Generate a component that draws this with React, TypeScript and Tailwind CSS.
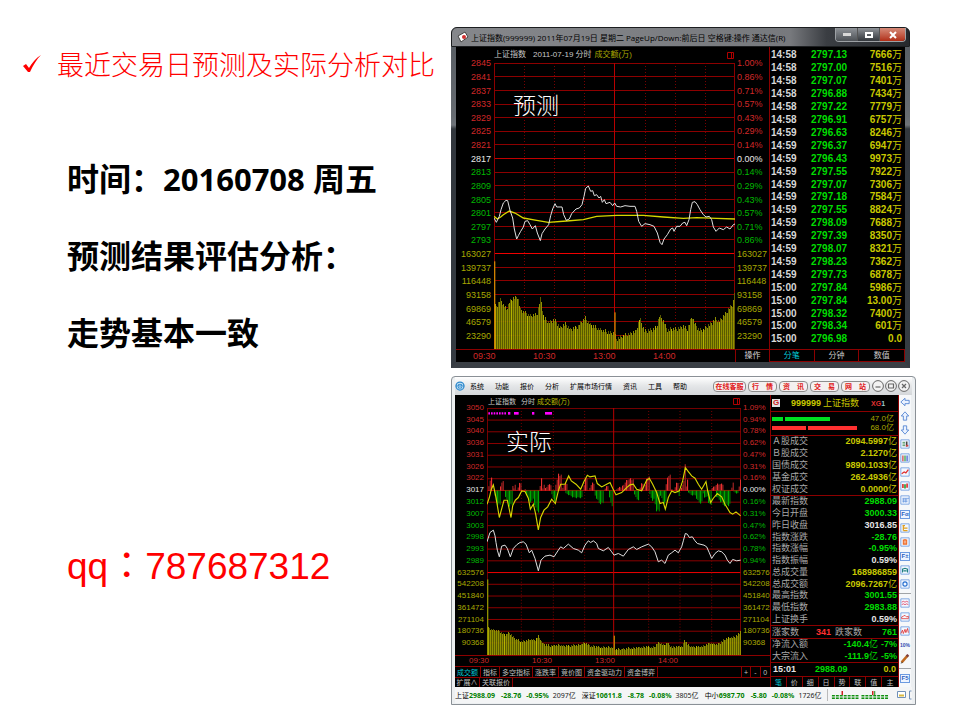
import React from "react";

const UI = "font-['Liberation_Sans','Noto_Sans_CJK_SC',sans-serif]";

type Point = [number, number];

const toPoints = (pts: Point[]) => pts.map((p) => p.join(",")).join(" ");

const valueAt = (profile: Point[], x: number) => {
  for (let i = 1; i < profile.length; i++) {
    const [x0, y0] = profile[i - 1];
    const [x1, y1] = profile[i];
    if (x <= x1) return y0 + ((y1 - y0) * (x - x0)) / (x1 - x0);
  }
  return profile[profile.length - 1][1];
};

/* ---------- forecast chart data ---------- */

const forecastPrice: Point[] = [
  [132, 85], [139, 98], [148, 80], [153, 60], [160, 40], [168, 32], [173, 33], [180, 62], [188, 85], [193, 118],
  [200, 148], [205, 138], [212, 125], [220, 112], [225, 95], [233, 93], [240, 105], [247, 118], [256, 108],
  [262, 130], [271, 153], [276, 132], [285, 118], [296, 105], [302, 78], [308, 58], [315, 42], [320, 52],
  [336, 52], [341, 75], [349, 92], [358, 88], [365, 72], [378, 58], [388, 55], [396, 45], [402, 20], [407, -4],
  [415, -11], [422, 5], [428, 3], [433, 18], [440, 15], [447, 25], [452, 20], [457, 38], [463, 30], [468, 42],
  [480, 38], [488, 48], [494, 40], [500, 50], [512, 52], [525, 48], [540, 50], [555, 50], [560, 65], [566, 95],
  [575, 110], [585, 102], [600, 105], [612, 110], [622, 130], [630, 158], [636, 165], [642, 148], [652, 135],
  [662, 118], [668, 115], [672, 125], [680, 110], [690, 110], [698, 100], [705, 98], [710, 108], [717, 90],
  [722, 60], [727, 38], [735, 36], [742, 45], [750, 60], [760, 75], [768, 82], [778, 80], [785, 90], [790, 112],
  [798, 125], [808, 115], [820, 120], [830, 112], [840, 118], [850, 105], [855, 103],
];
const forecastAverage: Point[] = [
  [132, 80], [142, 88], [152, 82], [160, 75], [178, 64], [195, 70], [220, 85], [260, 92], [295, 98], [350, 94],
  [400, 90], [440, 80], [500, 77], [580, 77], [640, 82], [700, 86], [740, 84], [800, 86], [855, 88],
];
const forecastVolume: Point[] = [
  [132, 345], [138, 350], [150, 330], [168, 360], [178, 335], [190, 325], [202, 322], [210, 360], [222, 368],
  [240, 378], [260, 375], [266, 345], [271, 325], [280, 385], [295, 398], [312, 390], [330, 415], [345, 402],
  [360, 420], [380, 412], [404, 385], [420, 405], [450, 420], [480, 430], [493, 432], [498, 448], [520, 438],
  [545, 430], [557, 425], [568, 385], [582, 425], [605, 420], [618, 415], [627, 378], [640, 395], [650, 420],
  [680, 418], [700, 410], [710, 420], [718, 400], [725, 378], [732, 400], [745, 420], [760, 420], [772, 408],
  [785, 400], [795, 388], [805, 395], [815, 385], [828, 370], [838, 352], [848, 345], [851, 315], [855, 285],
];

/* ---------- actual chart data ---------- */

const actualYellow: Point[] = [
  [111, 390], [118, 370], [124, 345], [130, 332], [138, 370], [148, 430], [156, 400], [162, 378], [172, 378],
  [183, 430], [188, 395], [196, 378], [205, 370], [215, 350], [225, 352], [235, 372], [241, 405], [250, 390],
  [257, 420], [265, 467], [272, 430], [282, 408], [293, 398], [305, 375], [316, 388], [325, 350], [332, 330],
  [345, 330], [356, 305], [364, 320], [378, 330], [392, 345], [402, 322], [412, 303], [420, 308], [435, 305],
  [442, 328], [455, 338], [470, 330], [480, 325], [488, 342], [498, 362], [515, 355], [530, 340], [540, 332],
  [550, 330], [560, 345], [575, 350], [590, 318], [598, 312], [608, 330], [620, 355], [630, 388], [640, 385],
  [646, 405], [655, 370], [665, 350], [675, 355], [688, 350], [698, 320], [706, 280], [715, 292], [725, 305],
  [735, 312], [745, 330], [755, 345], [768, 322], [773, 350], [782, 385], [790, 372], [802, 358], [815, 368],
  [825, 390], [840, 415], [848, 420], [858, 413], [872, 425],
];
const actualWhite: Point[] = [
  [111, 503], [120, 475], [130, 468], [135, 485], [138, 505], [142, 528], [148, 548], [155, 516], [165, 513],
  [172, 523], [181, 548], [190, 523], [200, 512], [210, 505], [220, 503], [228, 510], [238, 536], [245, 528],
  [255, 553], [265, 590], [273, 558], [285, 546], [300, 543], [312, 548], [325, 528], [332, 518], [340, 523],
  [355, 510], [370, 523], [385, 528], [395, 536], [405, 513], [415, 500], [422, 505], [430, 500], [440, 508],
  [445, 523], [460, 530], [475, 520], [485, 533], [492, 543], [505, 538], [520, 546], [535, 526], [550, 518],
  [560, 526], [575, 518], [595, 510], [605, 518], [615, 533], [625, 563], [635, 558], [645, 568], [655, 543],
  [665, 536], [675, 528], [685, 536], [695, 518], [700, 500], [706, 478], [712, 480], [718, 490], [727, 488],
  [735, 500], [742, 508], [750, 510], [762, 513], [770, 518], [778, 536], [785, 553], [795, 538], [805, 530],
  [815, 533], [825, 543], [832, 558], [840, 568], [848, 556], [860, 560], [872, 558],
];
const actualVolume: Point[] = [
  [111, 760], [130, 768], [150, 773], [165, 783], [177, 776], [195, 796], [215, 802], [240, 796], [255, 798],
  [264, 786], [278, 810], [300, 816], [320, 813], [350, 816], [385, 813], [404, 806], [420, 816], [460, 820],
  [488, 820], [500, 826], [540, 823], [590, 818], [610, 820], [625, 806], [640, 813], [650, 806], [665, 820],
  [697, 816], [703, 796], [712, 813], [730, 820], [760, 816], [780, 806], [800, 813], [820, 798], [840, 790],
  [855, 788], [868, 778], [872, 758],
];
// start, end and extreme of each run of buying (above 349) or selling (below 349)
const strength: [number, number, number][] = [
  [115, 127, 310], [133, 151, 395], [150, 160, 318], [165, 186, 397], [187, 190, 308], [190, 198, 330],
  [203, 213, 324], [224, 228, 338], [228, 246, 385], [248, 268, 415], [269, 275, 312], [277, 284, 330],
  [285, 303, 330], [304, 318, 382], [316, 334, 297], [337, 352, 325], [346, 398, 372], [401, 413, 305],
  [418, 433, 325], [434, 460, 390], [464, 476, 333], [477, 489, 400], [499, 513, 338], [516, 550, 312],
  [552, 565, 378], [569, 579, 325], [584, 598, 303], [598, 612, 380], [610, 630, 417], [630, 648, 388],
  [647, 662, 297], [664, 668, 337], [674, 685, 322], [682, 690, 367], [693, 700, 328], [700, 707, 263],
  [707, 712, 316], [714, 732, 364], [734, 756, 388], [758, 768, 372], [770, 783, 396], [785, 818, 328],
  [798, 842, 396], [844, 852, 323], [850, 864, 358], [866, 871, 316],
];

const gridRows = Array.from({ length: 22 }, (_, i) => i);

interface GridProps {
  left: number;
  top: number;
  width: number;
  height: number;
  dotted: number[];
  middle: number;
}

function ChartGrid({ left, top, width, height, dotted, middle }: GridProps) {
  return (
    <g shapeRendering="crispEdges" strokeWidth="3">
      {gridRows.map((i) => {
        const y = top + 1 + ((height - 2) * i) / 21;
        return (
          <line key={i} x1={left} x2={left + width} y1={y} y2={y} stroke={i === 14 ? "#f00000" : i === 7 ? "#c00000" : "#8c0000"} />
        );
      })}
      {dotted.map((x) => (
        <line key={x} x1={x} x2={x} y1={top} y2={top + height} stroke="#780000" strokeDasharray="3 6" />
      ))}
      <line x1={middle} x2={middle} y1={top} y2={top + height} stroke="#b80000" />
      <line x1={left + 1} x2={left + 1} y1={top} y2={top + height} stroke="#8c0000" />
      <line x1={left + width - 1} x2={left + width - 1} y1={top} y2={top + height} stroke="#8c0000" />
    </g>
  );
}

function VolumeBars({ profile, from, to, base, swing }: { profile: Point[]; from: number; to: number; base: number; swing: number }) {
  const bars: React.ReactElement[] = [];
  let i = 0;
  for (let x = from; x < to; x += 3) {
    const y = valueAt(profile, x) + (((i * 7) % 5) - 2) * swing;
    bars.push(<rect key={x} x={x} y={y} width={3} height={base - y} fill={i % 16 === 0 ? "#c8c800" : i % 2 ? "#646400" : "#a0a000"} />);
    i++;
  }
  return <g shapeRendering="crispEdges">{bars}</g>;
}

function ForecastPlot() {
  return (
    <svg viewBox="132 -380 723 858" preserveAspectRatio="none" className="block h-[286px] w-full">
      <ChartGrid left={132} top={-380} width={723} height={858} dotted={[223, 314, 404, 585, 676, 765]} middle={493} />
      <g opacity="0.9"><VolumeBars profile={forecastVolume} from={135} to={855} base={478} swing={3} /></g>
      <rect x={132} y={215} width={4} height={263} fill="#d08000" />
      <rect x={493} y={368} width={4} height={110} fill="#c08000" />
      <polyline points={toPoints(forecastAverage)} fill="none" stroke="#d6d600" strokeWidth="4" />
      <polyline points={toPoints(forecastPrice)} fill="none" stroke="#e0e0e0" strokeWidth="3" />
    </svg>
  );
}

function ActualPlot() {
  const bars: React.ReactElement[] = [];
  strength.forEach(([a, b, peak], k) => {
    for (let x = a; x < b; x += 4) {
      const t = Math.min(1, 0.4 + 1.3 * ((x - a) / (b - a + 0.1)));
      const wave = t * (1 - ((x * 5) % 3) * 0.08);
      const h = Math.abs(peak - 349) * wave;
      bars.push(
        <rect key={`${k}-${x}`} x={x} y={peak < 349 ? 349 - h : 349} width={3.4} height={h} fill={peak < 349 ? (x % 3 ? "#a82424" : "#e83030") : x % 3 ? "#007c00" : "#00a800"} />
      );
    }
  });
  return (
    <svg viewBox="111 101 762 742" preserveAspectRatio="none" className="block h-[247px] w-full">
      <ChartGrid left={111} top={101} width={762} height={742} dotted={[214, 310, 404, 596, 690, 785]} middle={491} />
      <g opacity="0.9"><VolumeBars profile={actualVolume} from={114} to={872} base={843} swing={1.5} /></g>
      {bars}
      <rect x={111} y={616} width={4} height={227} fill="#8f8f00" />
      <rect x={491} y={785} width={4} height={58} fill="#b08000" />
      <line x1={115} x2={170} y1={117} y2={117} stroke="#ff00ff" strokeWidth="7" strokeDasharray="5 3" />
      {[[174, 181], [192, 206], [246, 253], [285, 306]].map(([a, b]) => (
        <rect key={a} x={a} y={113} width={b - a} height={8} fill="#ff00ff" />
      ))}
      <polyline points={toPoints(actualYellow)} fill="none" stroke="#d6d600" strokeWidth="3.4" />
      <polyline points={toPoints(actualWhite)} fill="none" stroke="#e0e0e0" strokeWidth="3" />
    </svg>
  );
}

const toneOf = (i: number) => (i < 7 ? "text-[#d02828]" : i === 7 ? "text-[#e8e8e8]" : i < 14 ? "text-[#00b800]" : "text-[#a8a800]");

function Axis({ values, side, size }: { values: string[]; side: "left" | "right"; size: string }) {
  return (
    <div className={`flex flex-col leading-none ${size} ${side === "left" ? "items-end pr-[3px]" : "items-start pl-[2px]"} ${UI}`}>
      {values.map((v, i) => (
        <span key={i} className={`flex flex-1 items-center ${toneOf(i)}`}>{v}</span>
      ))}
    </div>
  );
}

const MarkIcon = () => (
  <svg viewBox="0 0 7 7" className="size-[7px]" fill="none" stroke="#b00000">
    <path d="M.5 .5h6v6h-6zM4.5 .5v6" />
  </svg>
);

/* ---------- forecast window ---------- */

const volumes1 = ["163027", "139737", "116448", "93158", "69869", "46579", "23290"];
const left1 = ["2845", "2841", "2837", "2833", "2829", "2825", "2821", "2817", "2813", "2809", "2805", "2801", "2797", "2793", ...volumes1];
const right1 = ["1.00%", "0.86%", "0.71%", "0.57%", "0.43%", "0.29%", "0.14%", "0.00%", "0.14%", "0.29%", "0.43%", "0.57%", "0.71%", "0.86%", ...volumes1];

const ticks: [string, string, string][] = [
  ["14:58", "2797.13", "7666万"], ["14:58", "2797.00", "7516万"], ["14:58", "2797.07", "7401万"],
  ["14:58", "2796.88", "7434万"], ["14:58", "2797.22", "7779万"], ["14:58", "2796.91", "6757万"],
  ["14:59", "2796.63", "8246万"], ["14:59", "2796.37", "6947万"], ["14:59", "2796.43", "9973万"],
  ["14:59", "2797.55", "7922万"], ["14:59", "2797.07", "7306万"], ["14:59", "2797.18", "7584万"],
  ["14:59", "2797.55", "8824万"], ["14:59", "2798.09", "7688万"], ["14:59", "2797.39", "8350万"],
  ["14:59", "2798.07", "8321万"], ["14:59", "2798.23", "7362万"], ["14:59", "2797.73", "6878万"],
  ["15:00", "2797.84", "5986万"], ["15:00", "2797.84", "13.00万"], ["15:00", "2798.32", "7400万"],
  ["15:00", "2798.34", "601万"], ["15:00", "2796.98", "0.0"],
];

function Amount({ text }: { text: string }) {
  const unit = text.endsWith("万") || text.endsWith("亿") ? text.slice(-1) : "";
  return (
    <>
      {unit ? text.slice(0, -1) : text}
      {unit && <span className="font-normal">{unit}</span>}
    </>
  );
}

function ForecastWindow() {
  return (
    <section className="w-[459px] rounded-t-md bg-[linear-gradient(180deg,#8d9195_0px,#c4c7ca_90px,#e0e2e4_98px,#14181c_102px,#22282e_100%)]">
      <header className="flex h-5 items-start rounded-t-md border border-[#1c1e20] bg-[linear-gradient(90deg,#85878b_0%,#77797d_74%,#3a3d42_82%,#26292d_100%)] pl-[5px]">
        <svg viewBox="0 0 12 12" className="mt-[3px] size-3">
          <path d="M1 5L8 1l3 5-7 5z" fill="#fff" stroke="#444" />
          <circle cx="7" cy="6" r="2" fill="#d03030" />
        </svg>
        <h2 className="ml-[2px] mt-[3px] flex-1 whitespace-nowrap font-['Open_Sans','Noto_Sans_CJK_SC',sans-serif] text-[8px] leading-[13px] text-black">
          上证指数(999999) 2011年07月19日 星期二 PageUp/Down:前后日 空格键:操作 通达信(R)
        </h2>
        <div className="mr-[3px] flex h-[14px] overflow-hidden rounded-b border border-t-0 border-[#9da1a5]">
          <button aria-label="最小化" className="flex w-[22px] items-center justify-center border-r border-[#555] bg-linear-to-b from-[#8f9398] to-[#4d5156]">
            <span className="h-[3px] w-2 bg-[#d8d8d8]" />
          </button>
          <button aria-label="最大化" className="flex w-[22px] items-center justify-center border-r border-[#555] bg-linear-to-b from-[#8f9398] to-[#33373c]">
            <span className="h-[6px] w-[8px] border-2 border-white" />
          </button>
          <button aria-label="关闭" className="flex w-[25px] items-center justify-center bg-linear-to-b from-[#d58a78] to-[#b02c14]">
            <svg viewBox="0 0 8 8" className="size-2"><path d="M1 1l6 6M7 1L1 7" stroke="#fff" strokeWidth="2" /></svg>
          </button>
        </div>
      </header>
      <div className="border-x-[5px] border-b-[6px] border-x-[#3f454b]/70 border-b-[#3a3f45]">
        <div className="flex bg-black">
          <div className="grid flex-1 grid-cols-[38px_1fr_34px]">
            <div className="pt-[10px]"><Axis values={left1} side="left" size="h-[286px] text-[9px]" /></div>
            <div className="relative">
              <div className={`flex h-4 items-center whitespace-nowrap text-[9px] leading-none text-[#c8c8c8] ${UI}`}>
                <span className="text-[8px]">上证指数</span>
                <span className="ml-[7px] text-[8px]">2011-07-19 分时</span>
                <span className="ml-[3px] flex-1 text-[8px] text-[#a8a800]">成交额(万)</span>
                <span className="mr-px"><MarkIcon /></span>
              </div>
              <ForecastPlot />
              <strong className="absolute left-[19px] top-[42px] font-['Noto_Sans_CJK_SC',sans-serif] text-[23px] font-light leading-[30px] text-white">预测</strong>
            </div>
            <div className="pt-[10px]"><Axis values={right1} side="right" size="h-[286px] text-[9px]" /></div>
            <div className={`col-span-2 flex h-[13px] items-center border-t border-[#8c0000] pl-[17px] text-[9px] leading-none text-[#d02828] ${UI}`}>
              {["09:30", "10:30", "13:00", "14:00"].map((t) => <time key={t} className="w-[60px]">{t}</time>)}
            </div>
            <button className={`h-[13px] border-l border-t border-[#8c0000] text-[8px] leading-none text-[#d8d8d8] ${UI}`}>操作</button>
          </div>
          <div className="flex w-[136px] flex-col border-l border-[#8c0000]">
            <table className={`mt-[2px] h-[297px] w-full border-collapse text-[10px] font-bold leading-none ${UI}`}>
              <tbody>
                {ticks.map(([time, price, amount], i) => (
                  <tr key={i}>
                    <td className="w-[41px] p-0 pl-px text-[#d8d8d8]">{time}</td>
                    <td className="p-0 text-[#00dc00]">{price}</td>
                    <td className="p-0 pr-[3px] text-right text-[#c8c800]"><Amount text={amount} /></td>
                  </tr>
                ))}
              </tbody>
            </table>
            <nav className={`mt-auto grid h-[13px] grid-cols-3 divide-x divide-[#8c0000] border-y border-r border-[#8c0000] text-[8px] leading-none text-[#c8c8c8] ${UI}`}>
              <button className="text-[#00c8d8]">分笔</button>
              <button>分钟</button>
              <button>数值</button>
            </nav>
          </div>
        </div>
      </div>
    </section>
  );
}

/* ---------- actual window ---------- */

const volumes2 = ["632576", "542208", "451840", "361472", "271104", "180736", "90368"];
const left2 = ["3050", "3045", "3040", "3036", "3031", "3026", "3022", "3017", "3012", "3007", "3003", "2998", "2993", "2989", ...volumes2];
const right2 = ["1.09%", "0.94%", "0.78%", "0.62%", "0.47%", "0.31%", "0.16%", "0.00%", "0.16%", "0.31%", "0.47%", "0.62%", "0.78%", "0.94%", ...volumes2];

const Y = "text-[#c8c800]";
const G = "text-[#00dc00]";
const W = "text-[#e4e4e4]";

const turnover: [string, string, string][] = [
  ["Ａ股成交", "2094.5997亿", Y], ["Ｂ股成交", "2.1270亿", Y], ["国债成交", "9890.1033亿", Y],
  ["基金成交", "262.4936亿", Y], ["权证成交", "0.0000亿", Y],
];
const quote: [string, string, string][] = [
  ["最新指数", "2988.09", G], ["今日开盘", "3000.33", G], ["昨日收盘", "3016.85", W], ["指数涨跌", "-28.76", G],
  ["指数涨幅", "-0.95%", G], ["指数振幅", "0.59%", W], ["总成交量", "168986859", Y], ["总成交额", "2096.7267亿", Y],
  ["最高指数", "3001.55", G], ["最低指数", "2983.88", G], ["上证换手", "0.59%", W],
];

function QuoteList({ rows, height }: { rows: [string, string, string][]; height: string }) {
  return (
    <dl className={`flex flex-col border-b border-[#8c0000] pl-px pr-px ${height}`}>
      {rows.map(([label, value, tone]) => (
        <div key={label} className="flex flex-1 items-center justify-between">
          <dt className="text-[9px] text-[#a8a8a8]">{label}</dt>
          <dd className={`text-[9px] font-bold ${tone}`}><Amount text={value} /></dd>
        </div>
      ))}
    </dl>
  );
}

function ToolGlyph({ name }: { name: string }) {
  const arrow: Record<string, string> = {
    left: "M1 6l5-4.500V4h5v4H6v2.500z",
    up: "M6 1l4.500 5H8v5H4V6H1.500z",
    down: "M6 11L1.500 6H4V1h4v5h2.500z",
  };
  if (arrow[name]) {
    return <svg viewBox="0 0 12 12" className="size-[10px]"><path d={arrow[name]} fill="#eaf2ff" stroke="#4a7ed0" /></svg>;
  }
  if (name === "pencil") {
    return (
      <svg viewBox="0 0 12 12" className="size-[10px]">
        <path d="M2 10L9 2" stroke="#c06a20" strokeWidth="3" />
        <path d="M8 3l2-2" stroke="#804040" strokeWidth="3" />
        <path d="M1 11l2-1" stroke="#222" />
      </svg>
    );
  }
  if (name === "10%") return <span className="text-[5px] font-bold leading-none text-[#3048b0]">10%</span>;
  if (name.startsWith("F")) {
    return <span className="flex h-[9px] w-[10px] items-center justify-center border border-[#6c9ae0] bg-[#eef4ff] text-[6px] font-bold leading-none text-[#2860c0]">{name}</span>;
  }
  return (
    <svg viewBox="0 0 12 12" className="size-[10px]" fill="none">
      <path d="M1 1h10v10H1z" fill="#f4f8ff" stroke="#6c9ae0" />
      {name === "report" && <><path d="M3 4h3M3 6h3M3 8h3" stroke="#308040" /><path d="M8 3v6" stroke="#444" strokeWidth="2" /><path d="M7 8h3" stroke="#d04040" strokeWidth="2" /></>}
      {name === "columns" && <><path d="M3.500 3v7" stroke="#d04040" strokeWidth="1.500" /><path d="M6 3v7" stroke="#30a040" strokeWidth="1.500" /><path d="M8.500 3v7" stroke="#4060d0" strokeWidth="1.500" /></>}
      {name === "trend" && <path d="M2 8l3-2 2 1 3-4" stroke="#e03030" strokeWidth="1.500" />}
      {name === "candles" && <><path d="M3.500 3.500v5M8.500 3v5" stroke="#e03030" strokeWidth="2" /><path d="M6 4v5" stroke="#20a040" strokeWidth="2" /></>}
      {name === "stack" && <path d="M3 4h8M3 6h6M3 8h6M4 4v5M7 4v5" stroke="#6c9ae0" />}
      {name === "tree" && <path d="M3 3h3M4 3v6M4 6h5M4 9h5" stroke="#e0a020" strokeWidth="1.500" />}
      {name === "self" && <path d="M4 3.500h4v5H4zM6 2.500v6" stroke="#f06820" strokeWidth="1.300" />}
      {name === "formula" && <path d="M3 9V5l3-1 3 1v4M4 7h4" stroke="#208080" strokeWidth="1.300" />}
      {name === "ring" && <circle cx="6" cy="6" r="2.500" stroke="#2870d0" strokeWidth="1.400" />}
      {name === "waves" && <path d="M2 5l2-1 2 1 2-1 2 1M2 8l2-1 2 1 2-1 2 1" stroke="#e04060" />}
      {name === "area" && <path d="M2 8V6l2-1 2-1 2 2 2-1v3z" stroke="#e04040" />}
      {name === "zigzag" && <path d="M1 9l2-4 1 4 2-5 1 4 2-5 1 5" stroke="#e03030" />}
    </svg>
  );
}

const toolsA = ["left", "up", "down", "report", "columns", "trend", "candles", "stack", "Fα", "tree", "self", "F±", "formula", "ring"];
const toolsB = ["waves", "area", "zigzag", "10%", "pencil"];

function ToolButtons({ names }: { names: string[] }) {
  return (
    <>
      {names.map((n) => (
        <button key={n} aria-label={n} className="flex h-[14px] w-full items-center justify-center"><ToolGlyph name={n} /></button>
      ))}
    </>
  );
}

const indices = [
  ["上证", "2988.09", "-28.76", "-0.95%", "2097亿"],
  ["深证", "10611.8", "-8.78", "-0.08%", "3805亿"],
  ["中小", "6987.70", "-5.80", "-0.08%", "1726亿"],
];

function ActualWindow() {
  return (
    <section className={`w-[465px] rounded-t border border-[#8a9096] bg-[#eceff1] pb-px pl-[3px] pr-[3px] ${UI}`}>
      <header className="flex h-[18px] items-center bg-linear-to-b from-white via-[#e4e6e8] to-[#d4d7da] text-[7px] leading-none">
        <svg viewBox="0 0 12 12" className="size-[10px]" fill="none">
          <circle cx="6" cy="6" r="4.800" fill="#d8ecfa" stroke="#2c88cc" strokeWidth="1.500" />
          <path d="M1 6h10M4 6V4h4v2M4 7v1.500h4V7" stroke="#2c88cc" strokeWidth="1.200" />
        </svg>
        <nav className="ml-[5px] flex flex-1 gap-[11px] whitespace-nowrap text-black">
          {["系统", "功能", "报价", "分析", "扩展市场行情", "资讯", "工具", "帮助"].map((m) => <button key={m}>{m}</button>)}
        </nav>
        <div className="flex items-center gap-[2px] whitespace-nowrap font-bold text-[#e01818]">
          <button className="h-[11px] w-[33px] rounded border border-[#8c8c8c] bg-[#f4f0f0]">在线客服</button>
          {["行情", "资讯", "交易", "网站"].map((m) => (
            <button key={m} className="flex h-[11px] w-[29px] items-center justify-between rounded border border-[#8c8c8c] bg-[#f4f0f0] px-[3px]">
              <span>{m[0]}</span><span>{m[1]}</span>
            </button>
          ))}
        </div>
        <div className="ml-[2px] mr-[2px] flex gap-px">
          {["M3.500 7h5", "M3.500 4h5v4h-5z", "M4 4l4 4M8 4l-4 4"].map((d, i) => (
            <button key={d} aria-label={["最小化", "还原", "关闭"][i]}>
              <svg viewBox="0 0 12 12" className="size-3" fill="none" stroke="#666">
                <circle cx="6" cy="6" r="5.400" fill="#f2f2f2" />
                <path d={d} strokeWidth="1.200" />
              </svg>
            </button>
          ))}
        </div>
      </header>
      <div className="flex">
        <div className="flex flex-1 bg-black">
          <div className="flex-1">
            <div className="grid grid-cols-[32px_1fr_29px]">
              <div className="pt-[7px]"><Axis values={left2} side="left" size="h-[247px] text-[8px]" /></div>
              <div className="relative">
                <div className="flex h-[13px] items-center whitespace-nowrap text-[7px] leading-none text-[#c8c8c8]">
                  <span className="ml-px">上证指数</span>
                  <span className="ml-[5px]">分时</span>
                  <span className="ml-[2px] flex-1 text-[#b8b800]">成交额(万)</span>
                  <span className="mr-px"><MarkIcon /></span>
                </div>
                <ActualPlot />
                <strong className="absolute left-[19px] top-[30px] font-['Noto_Sans_CJK_SC',sans-serif] text-[23px] font-light leading-[30px] text-white">实际</strong>
              </div>
              <div className="pt-[7px]"><Axis values={right2} side="right" size="h-[247px] text-[8px]" /></div>
            </div>
            <div className="flex h-[11px] items-center border-t border-[#8c0000] pl-[14px] text-[8px] leading-none text-[#d02828]">
              {["09:30", "10:30", "13:00", "14:00"].map((t) => <time key={t} className="w-[63px]">{t}</time>)}
            </div>
            <nav className="flex h-[11px] border-t border-[#8c0000] text-[7px] leading-none text-[#c0c0c0]">
              {["成交额", "指标", "多空指标", "涨跌率", "竞价图", "资金驱动力", "资金博弈"].map((m, i) => (
                <button key={m} className={`whitespace-nowrap border-r border-[#8c0000] px-[2px] ${i === 0 ? "text-[#00c8d8]" : ""}`}>{m}</button>
              ))}
              <div className="ml-auto grid w-[29px] grid-cols-3 divide-x divide-[#8c0000] border-l border-[#8c0000]">
                <button>+</button><button>-</button><button>0</button>
              </div>
            </nav>
            <nav className="flex h-[10px] border-t border-[#8c0000] text-[7px] leading-none text-[#c0c0c0]">
              <button className="w-[25px] border-r border-[#8c0000]">扩展∧</button>
              <button className="border-r border-[#8c0000] px-[2px]">关联报价</button>
            </nav>
          </div>
          <div className="w-[129px] border-x border-[#8c0000] leading-none">
            <div className="flex h-[17px] items-center border-b border-[#8c0000] pl-px">
              <span className="flex size-[8px] items-center justify-center bg-[#e0e0e0] text-[8px] font-bold leading-none text-[#d02020]">G</span>
              <span className={`ml-[11px] text-[9px] font-bold ${Y}`}>999999</span>
              <span className={`ml-[2px] text-[9px] ${Y}`}>上证指数</span>
              <span className="ml-[12px] text-[7px] font-bold text-[#e03030]">XG<span className="text-[#9cc]">1</span></span>
            </div>
            <div className="flex h-[24px] flex-col justify-center border-b border-[#8c0000] pl-px pr-[4px]">
              <div className="flex h-[9px] items-center gap-[2px] text-[8px] text-[#a8a800]">
                <span className="h-[4px] w-[11px] bg-[#00e020]" />
                <span className="h-[4px] w-[45px] bg-[#00e020]" />
                <span className="ml-auto">47.0亿</span>
              </div>
              <div className="flex h-[9px] items-center gap-[2px] text-[8px] text-[#a8a800]">
                <span className="h-[4px] w-[34px] bg-[#ff3030]" />
                <span className="h-[4px] w-[49px] bg-[#ff3030]" />
                <span className="ml-auto">68.0亿</span>
              </div>
            </div>
            <QuoteList rows={turnover} height="h-[60px]" />
            <QuoteList rows={quote} height="h-[130px]" />
            <div className="flex h-[13px] items-center border-b border-[#8c0000] px-px text-[9px] text-[#a8a8a8]">
              <span>涨家数</span>
              <b className="ml-auto text-[#ff3030]">341</b>
              <span className="ml-1">跌家数</span>
              <b className={`ml-5 ${G}`}>761</b>
            </div>
            <dl className="flex h-[24px] flex-col border-b border-[#8c0000] px-px">
              {[["净流入额", "-140.4亿", "-7%"], ["大宗流入", "-111.9亿", "-5%"]].map(([label, value, pct]) => (
                <div key={label} className="flex flex-1 items-center text-[9px]">
                  <dt className="text-[#a8a8a8]">{label}</dt>
                  <dd className={`ml-auto font-bold ${G}`}><Amount text={value} /></dd>
                  <dd className={`ml-[3px] font-bold ${G}`}>{pct}</dd>
                </div>
              ))}
            </dl>
            <div className="flex h-[14px] items-center border-b border-[#8c0000] px-[2px] text-[9px] font-bold">
              <span className={W}>15:01</span>
              <span className={`ml-[19px] ${G}`}>2988.09</span>
              <span className={`ml-auto ${Y}`}>0.0</span>
            </div>
            <nav className="grid h-[10px] grid-cols-8 divide-x divide-[#8c0000] text-[7px] leading-none text-[#c0c0c0]">
              {["笔", "价", "细", "日", "势", "联", "值", "主"].map((m, i) => (
                <button key={m} className={i === 0 ? "text-[#00c8d8]" : ""}>{m}</button>
              ))}
            </nav>
          </div>
        </div>
        <nav className="mr-px flex w-3 flex-col items-center bg-[#f6f8fa]">
          <ToolButtons names={toolsA} />
          <hr className="my-[2px] w-full border-[#a0a4a8]" />
          <ToolButtons names={toolsB} />
          <hr className="my-[2px] w-full border-[#a0a4a8]" />
          <ToolButtons names={["F5"]} />
        </nav>
      </div>
      <footer className="flex h-4 items-center bg-[#f4f5f6] font-['Noto_Sans','Noto_Sans_CJK_SC',sans-serif] text-[7px] leading-none text-black">
        {indices.map(([name, value, change, pct, total]) => (
          <p key={name} className="mr-[6px] flex whitespace-nowrap font-bold text-[#008000]">
            <span className="font-normal text-black">{name}</span>
            <span>{value}</span>
            <span className="ml-[6px]">{change}</span>
            <span className="ml-[5px]">{pct}</span>
            <span className="ml-1 font-normal text-[#222]">{total}</span>
          </p>
        ))}
        <svg viewBox="0 0 62 12" className="h-3 w-[62px] border-l border-[#bbb]">
          <path d="M4 8h27M34 8h27" stroke="#109010" strokeWidth="4" strokeDasharray="3 1" />
          <path d="M4 8h57" stroke="#f4f5f6" />
          <path d="M14.500 2v4M45.500 2v4" stroke="#d02020" strokeWidth="1.500" />
          <path d="M47.500 2v4" stroke="#109010" />
        </svg>
        <svg viewBox="0 0 16 12" className="ml-auto h-3 w-4" fill="#fff" stroke="#7090b8">
          <path d="M1.500 2.500h8v6h-8z" />
          <path d="M3 6.500h5" stroke="#d8b840" strokeWidth="2" />
          <path d="M15.500 2h-2v8h2" fill="none" />
        </svg>
      </footer>
    </section>
  );
}

export default function App() {
  return (
    <main className="flex min-h-screen bg-white">
      <div className="flex-1 whitespace-nowrap">
        <h1 className="flex items-center gap-[15px] pl-[22px] pt-[46px] font-['Noto_Sans_CJK_SC',sans-serif] text-[27px] font-light leading-9 text-[#ff0000]">
          <svg viewBox="0 0 20 18" className="h-[18px] w-5 shrink-0" fill="#ff0000">
            <path d="M1 11l3-2 3 4C10 8 14 3 19 0c-4 4-8 10-11 17H6z" />
          </svg>
          最近交易日预测及实际分析对比
        </h1>
        <div className="mt-[57px] pl-[67px] font-['Noto_Sans_CJK_SC',sans-serif] text-[32px] font-bold leading-[77px] text-black">
          <p>时间：<span className="font-['Open_Sans',sans-serif] text-[31px] leading-none">20160708 </span>周五</p>
          <p>预测结果评估分析：</p>
          <p>走势基本一致</p>
        </div>
        <p className="mt-[173px] pl-[67px] font-['Liberation_Sans','Noto_Sans_CJK_TC',sans-serif] text-[37px] leading-[48px] text-[#ff0000]" lang="zh-Hant">
          qq：787687312
        </p>
      </div>
      <div className="mr-11 flex shrink-0 flex-col gap-2 pt-[27px]">
        <ForecastWindow />
        <ActualWindow />
      </div>
    </main>
  );
}
